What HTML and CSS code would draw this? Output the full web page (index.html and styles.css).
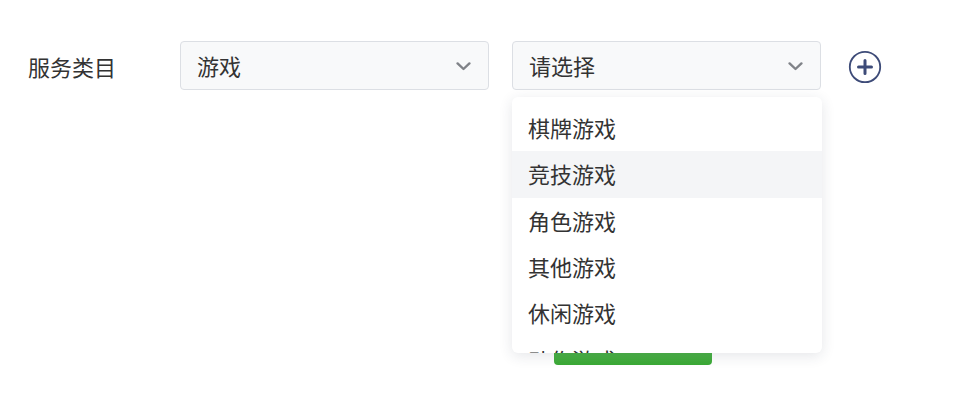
FILE: index.html
```html
<!DOCTYPE html>
<html lang="zh">
<head>
<meta charset="utf-8">
<link rel="stylesheet" href="styles.css">
</head>
<body>
<div class="page">
  <div class="form-row">
    <div class="label">服务类目</div>
    <div class="select-wrap">
      <div class="select">
        <span class="value">游戏</span>
        <svg class="chev" width="15" height="9" viewBox="0 0 15 9"><path d="M1.6 1.4 L7.5 7 L13.4 1.4" fill="none" stroke="#808388" stroke-width="2.4" stroke-linecap="round" stroke-linejoin="round"/></svg>
      </div>
    </div>
    <div class="select-wrap">
      <div class="select">
        <span class="value">请选择</span>
        <svg class="chev" width="15" height="9" viewBox="0 0 15 9"><path d="M1.6 1.4 L7.5 7 L13.4 1.4" fill="none" stroke="#808388" stroke-width="2.4" stroke-linecap="round" stroke-linejoin="round"/></svg>
      </div>
      <div class="dropdown">
        <ul class="options">
          <li class="option">棋牌游戏</li>
          <li class="option hover">竞技游戏</li>
          <li class="option">角色游戏</li>
          <li class="option">其他游戏</li>
          <li class="option">休闲游戏</li>
          <li class="option">动作游戏</li>
        </ul>
      </div>
    </div>
    <button class="add-btn" aria-label="添加">
      <svg width="34" height="34" viewBox="0 0 34 34"><circle cx="17" cy="17" r="15.2" fill="none" stroke="#3d4b78" stroke-width="1.8"/><path d="M17 10.5 V23.5 M10.5 17 H23.5" stroke="#3d4b78" stroke-width="3" stroke-linecap="round"/></svg>
    </button>
  </div>
  <div class="actions">
    <button class="submit"></button>
  </div>
</div>
</body>
</html>
```

FILE: styles.css
```css
* { box-sizing: border-box; }
html, body { margin: 0; padding: 0; background: #fff; }
body {
  font-family: "Noto Sans CJK SC", "Noto Sans", sans-serif;
  color: #333;
  width: 956px;
  height: 404px;
  overflow: hidden;
}
.page { padding: 41px 0 0 28px; }
.form-row {
  display: flex;
  align-items: center;
  height: 49px;
}
.label {
  width: 152px;
  font-size: 22px;
  color: #333;
}
.select-wrap {
  position: relative;
  width: 309px;
  margin-right: 23px;
}
.select-wrap:nth-of-type(3) { margin-right: 28px; }
.select {
  height: 49px;
  border: 1px solid #dcdfe4;
  border-radius: 4px;
  background: #f8f9fa;
  display: flex;
  align-items: center;
  justify-content: space-between;
  padding: 0 17px 0 16px;
}
.value { font-size: 22px; color: #333; margin-top: -2px; }
.chev { display: block; margin-top: 1px; }
.dropdown {
  position: absolute;
  left: 0;
  top: 56px;
  width: 310px;
  height: 256px;
  background: #fff;
  border-radius: 6px;
  box-shadow: 0 3px 14px rgba(40, 50, 70, 0.12);
  overflow: hidden;
  z-index: 10;
  padding-top: 8px;
}
.options { list-style: none; margin: 0; padding: 0; }
.option {
  height: 46.3px;
  display: flex;
  align-items: center;
  padding-left: 16px;
  font-size: 22px;
  color: #333;
  padding-bottom: 2px;
}
.option.hover { background: #f4f5f7; }
.add-btn {
  border: 0;
  background: none;
  padding: 0;
  width: 34px;
  height: 34px;
  display: flex;
  margin-left: -1px;
  margin-top: 2px;
}
.actions { padding-left: 526px; margin-top: 235px; }
.submit {
  display: block;
  width: 158px;
  height: 40px;
  border: 0;
  border-radius: 4px;
  background: linear-gradient(#73c56f, #3aa935);
}
```
